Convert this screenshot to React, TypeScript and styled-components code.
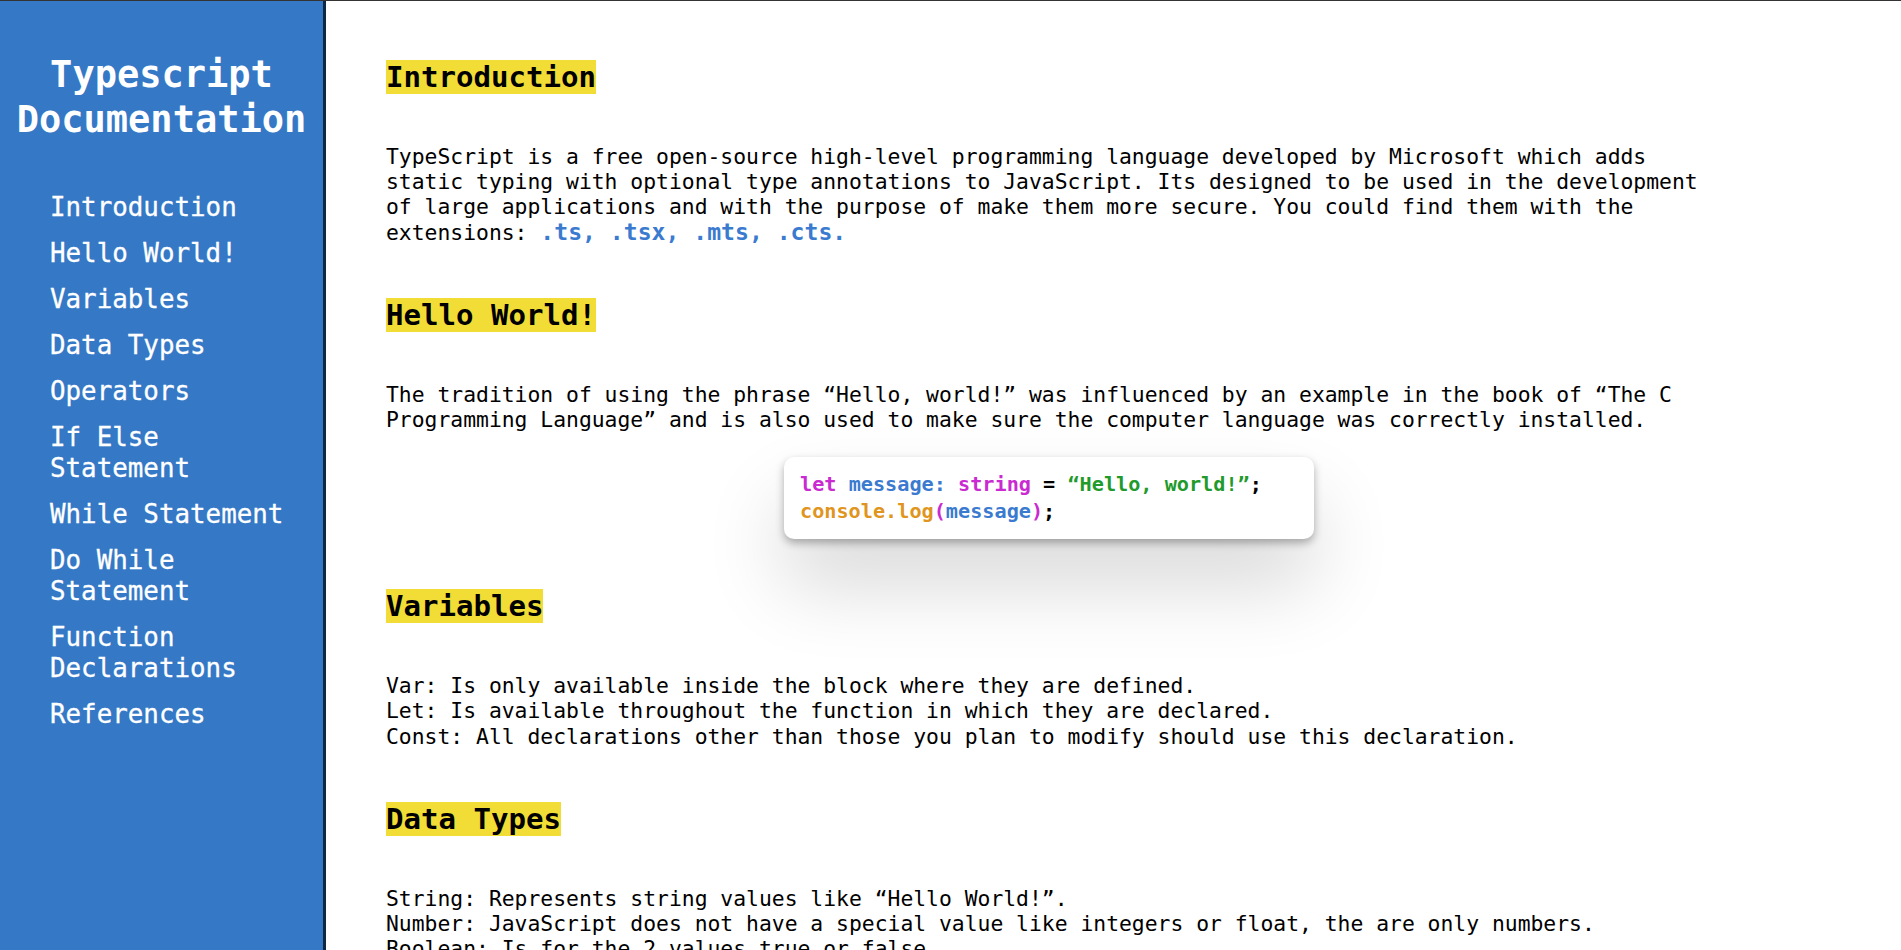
import styled, { createGlobalStyle } from 'styled-components';
import { FC, ReactNode } from 'react';

const GlobalStyle = createGlobalStyle`
  *, *::before, *::after {
    box-sizing: border-box;
  }

  html, body {
    margin: 0;
    padding: 0;
    height: 100%;
    overflow: hidden;
    background: #ffffff;
    font-family: 'DejaVu Sans Mono', 'Liberation Mono', monospace;
  }
`;

const StyledLayout = styled.div`
  display: flex;
  height: 100vh;
  border-top: 1px solid #333333;
`;

const StyledSidebar = styled.aside`
  flex: 0 0 326px;
  background-color: #3478c6;
  border-right: 3px solid #0d2944;
  padding-top: 51px;
  color: #ffffff;
`;

const StyledTitle = styled.h1`
  margin: 0;
  font-size: 37px;
  line-height: 45px;
  font-weight: bold;
  text-align: center;
`;

const StyledNavList = styled.ul`
  list-style: none;
  margin: 50px 0 0;
  padding: 0 30px 0 50px;
  display: flex;
  flex-direction: column;
  gap: 15px;
`;

const StyledNavLink = styled.a`
  display: block;
  color: #ffffff;
  text-decoration: none;
  font-size: 25.85px;
  line-height: 31px;
  -webkit-text-stroke: 0.3px #ffffff;
`;

const StyledMain = styled.main`
  flex: 1;
  overflow-y: auto;
  padding: 59px 0 0 60px;
  scrollbar-width: none;

  &::-webkit-scrollbar {
    display: none;
  }
`;

const StyledColumn = styled.div`
  max-width: 1326px;
`;

const StyledHeading = styled.h2`
  margin: 0 0 50px;
  font-size: 29.07px;
  font-weight: bold;
  color: #000000;
`;

const StyledMark = styled.span`
  background-color: #f1dd36;
`;

const StyledParagraph = styled.p<{ $after?: number }>`
  margin: 0 0 ${({ $after }) => $after ?? 53}px;
  font-size: 21.36px;
  line-height: 25.2px;
  color: #000000;
`;

const StyledExtension = styled.span`
  color: #3a7bd0;
  font-weight: bold;
  font-size: 23.1px;
  line-height: 20px;
`;

const StyledCodeCard = styled.pre`
  width: 530px;
  margin: 0 auto 50px;
  padding: 14px 16px;
  border-radius: 10px;
  background: #ffffff;
  box-shadow: 0 4px 9px rgba(0, 0, 0, 0.3), 0 45px 80px rgba(0, 0, 0, 0.16);
  font-family: 'DejaVu Sans Mono', 'Liberation Mono', monospace;
  font-size: 20.2px;
  line-height: 27px;
  font-weight: bold;
  color: #000000;
  white-space: pre;
`;

const StyledToken = styled.span<{ $kind: 'keyword' | 'name' | 'text' | 'call' }>`
  color: ${({ $kind }) =>
    ({
      keyword: '#c92ad1',
      name: '#3a7bd0',
      text: '#1f9a2c',
      call: '#e0951e',
    })[$kind]};
`;

const navItems = [
  'Introduction',
  'Hello World!',
  'Variables',
  'Data Types',
  'Operators',
  'If Else Statement',
  'While Statement',
  'Do While Statement',
  'Function Declarations',
  'References',
];

type SectionProps = {
  title: string;
  children: ReactNode;
};

const Section: FC<SectionProps> = ({ title, children }) => (
  <section id={title.replace(/\W+/g, '_')}>
    <StyledHeading>
      <StyledMark>{title}</StyledMark>
    </StyledHeading>
    {children}
  </section>
);

export default function App() {
  return (
    <>
      <GlobalStyle />
      <StyledLayout>
        <StyledSidebar>
          <StyledTitle>Typescript Documentation</StyledTitle>
          <StyledNavList>
            {navItems.map((item) => (
              <li key={item}>
                <StyledNavLink href={`#${item.replace(/\W+/g, '_')}`}>{item}</StyledNavLink>
              </li>
            ))}
          </StyledNavList>
        </StyledSidebar>

        <StyledMain>
          <StyledColumn>
            <Section title="Introduction">
              <StyledParagraph>
                TypeScript is a free open-source high-level programming language developed by
                Microsoft which adds static typing with optional type annotations to JavaScript.
                Its designed to be used in the development of large applications and with the
                purpose of make them more secure. You could find them with the extensions:{' '}
                <StyledExtension>.ts, .tsx, .mts, .cts.</StyledExtension>
              </StyledParagraph>
            </Section>

            <Section title="Hello World!">
              <StyledParagraph $after={25}>
                The tradition of using the phrase “Hello, world!” was influenced by an example in
                the book of “The C Programming Language” and is also used to make sure the computer
                language was correctly installed.
              </StyledParagraph>
              <StyledCodeCard>
                <StyledToken $kind="keyword">let</StyledToken>{' '}
                <StyledToken $kind="name">message:</StyledToken>{' '}
                <StyledToken $kind="keyword">string</StyledToken> ={' '}
                <StyledToken $kind="text">“Hello, world!”</StyledToken>;{'\n'}
                <StyledToken $kind="call">console.log</StyledToken>
                <StyledToken $kind="keyword">(</StyledToken>
                <StyledToken $kind="name">message</StyledToken>
                <StyledToken $kind="keyword">)</StyledToken>;
              </StyledCodeCard>
            </Section>

            <Section title="Variables">
              <StyledParagraph>
                Var: Is only available inside the block where they are defined.
                <br />
                Let: Is available throughout the function in which they are declared.
                <br />
                Const: All declarations other than those you plan to modify should use this
                declaration.
              </StyledParagraph>
            </Section>

            <Section title="Data Types">
              <StyledParagraph>
                String: Represents string values like “Hello World!”.
                <br />
                Number: JavaScript does not have a special value like integers or float, the are
                only numbers.
                <br />
                Boolean: Is for the 2 values true or false.
              </StyledParagraph>
            </Section>

            <Section title="Operators">
              <StyledParagraph>
                Arithmetic: +, -, *, /, % and ** work on numbers.
                <br />
                Comparison: ===, !==, &lt;, &gt;, &lt;= and &gt;= return a boolean.
              </StyledParagraph>
            </Section>
          </StyledColumn>
        </StyledMain>
      </StyledLayout>
    </>
  );
}
